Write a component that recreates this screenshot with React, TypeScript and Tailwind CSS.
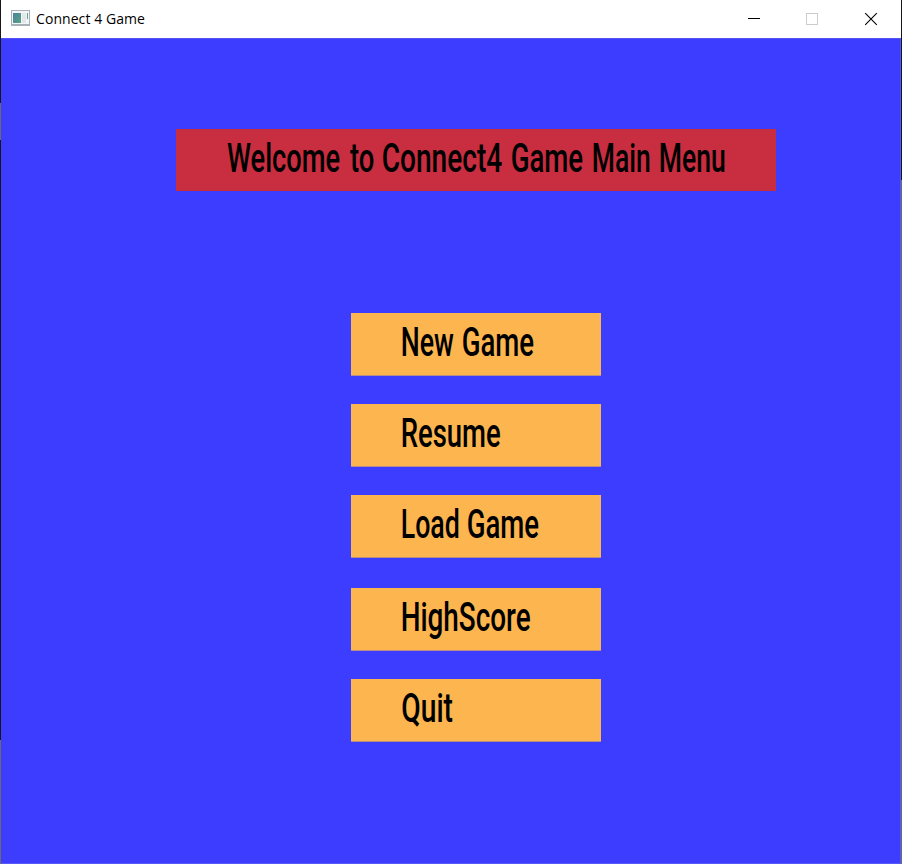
import { useLayoutEffect, useRef, useState } from "react";

// A condensed display word, squeezed so that its ink fills the given width.
function Word({ text, width, gap = 0 }: { text: string; width: number; gap?: number }) {
  const ref = useRef<HTMLSpanElement>(null);
  const [transform, setTransform] = useState("none");

  useLayoutEffect(() => {
    const el = ref.current;
    const ctx = document.createElement("canvas").getContext("2d");
    if (!el || !ctx) return;
    const s = getComputedStyle(el);
    ctx.font = `${s.fontWeight} ${s.fontSize} ${s.fontFamily}`;
    const m = ctx.measureText(text);
    const scale = width / (m.actualBoundingBoxLeft + m.actualBoundingBoxRight);
    setTransform(`scaleX(${scale}) translateX(${m.actualBoundingBoxLeft}px)`);
  }, [text, width]);

  return (
    <span className="block shrink-0" style={{ width, marginLeft: gap }}>
      <span ref={ref} className="block w-max origin-left whitespace-nowrap" style={{ transform }}>
        {text}
      </span>
    </span>
  );
}

const label =
  "flex font-['Roboto',sans-serif] text-[41px] leading-[58px] font-medium text-black";
const button = `${label} h-[63px] w-[250px] border-b border-[#b88c89] bg-[#fdb64f] pl-[51px] text-left`;

export default function App() {
  return (
    <div className="flex h-[864px] w-[902px] overflow-hidden bg-[#3d3dff]">
      <div className="flex w-px shrink-0 flex-col bg-[#171717]">
        <div className="mt-[103px] h-[37px] bg-[#6b6b6b]" />
        <div className="mt-[600px] flex-1 bg-[#6b6b6b]" />
      </div>
      <div className="flex w-[900px] shrink-0 flex-col">
        <header className="flex h-[38px] shrink-0 items-center bg-white">
          <svg className="ml-[10px] h-[16px] w-[19px] -translate-y-px" viewBox="0 0 19 16" shapeRendering="crispEdges">
            <defs>
              <linearGradient id="pane" x1="0" y1="0" x2="1" y2="1">
                <stop offset="0" stopColor="#4c7fa0" />
                <stop offset="1" stopColor="#57a582" />
              </linearGradient>
            </defs>
            <rect x="0" y="0" width="19" height="16" fill="#a9b0b6" />
            <rect x="1" y="1" width="17" height="13" fill="#f3f4f5" />
            <rect x="2" y="3" width="8" height="10" fill="url(#pane)" />
            <rect x="11" y="3" width="4" height="10" fill="#e3e6ea" />
            <rect x="16" y="3" width="1" height="6" fill="#62a58d" />
          </svg>
          <span className="ml-[6px] flex-1 font-['Open_Sans',sans-serif] text-[14px] leading-5 tracking-[0.07px] text-black">
            Connect 4 Game
          </span>
          <svg className="h-[38px] w-[174px]" viewBox="0 0 174 38" fill="none">
            <path d="M21 18.5h12" stroke="#000" />
            <rect x="79.5" y="13.5" width="11" height="11" stroke="#ccc" />
            <path d="M138.2 13.2l11.6 11.6M149.8 13.2l-11.6 11.6" stroke="#000" strokeWidth="1.1" />
          </svg>
        </header>
        <main className="flex flex-1 flex-col items-center border-t border-r border-b border-t-[#5252f5] border-r-[#5858f5] border-b-[#5858f5] pl-[50px]">
          <h1 className={`${label} mt-[90px] h-[62px] w-[600px] shrink-0 bg-[#c92d40] pl-[51px]`}>
            <Word text="Welcome" width={112.5} />
            <Word text="to" width={23.5} gap={10.5} />
            <Word text="Connect4" width={119} gap={10} />
            <Word text="Game" width={70.5} gap={9.5} />
            <Word text="Main" width={56.5} gap={11} />
            <Word text="Menu" width={64.5} gap={10.5} />
          </h1>
          <nav className="mt-[122px] flex flex-col">
            <button className={button}>
              <Word text="New" width={51.5} />
              <Word text="Game" width={70.5} gap={9.5} />
            </button>
            <button className={`${button} mt-[28px]`}>
              <Word text="Resume" width={98} />
            </button>
            <button className={`${button} mt-[28px]`}>
              <Word text="Load" width={56.5} />
              <Word text="Game" width={70.5} gap={9.5} />
            </button>
            <button className={`${button} mt-[30px]`}>
              <Word text="HighScore" width={128} />
            </button>
            <button className={`${button} mt-[28px]`}>
              <Word text="Quit" width={50.5} />
            </button>
          </nav>
        </main>
      </div>
      <div className="flex w-px shrink-0 flex-col bg-[#171717]">
        <div className="mt-[180px] flex-1 bg-[#6b6b6b]" />
      </div>
    </div>
  );
}
